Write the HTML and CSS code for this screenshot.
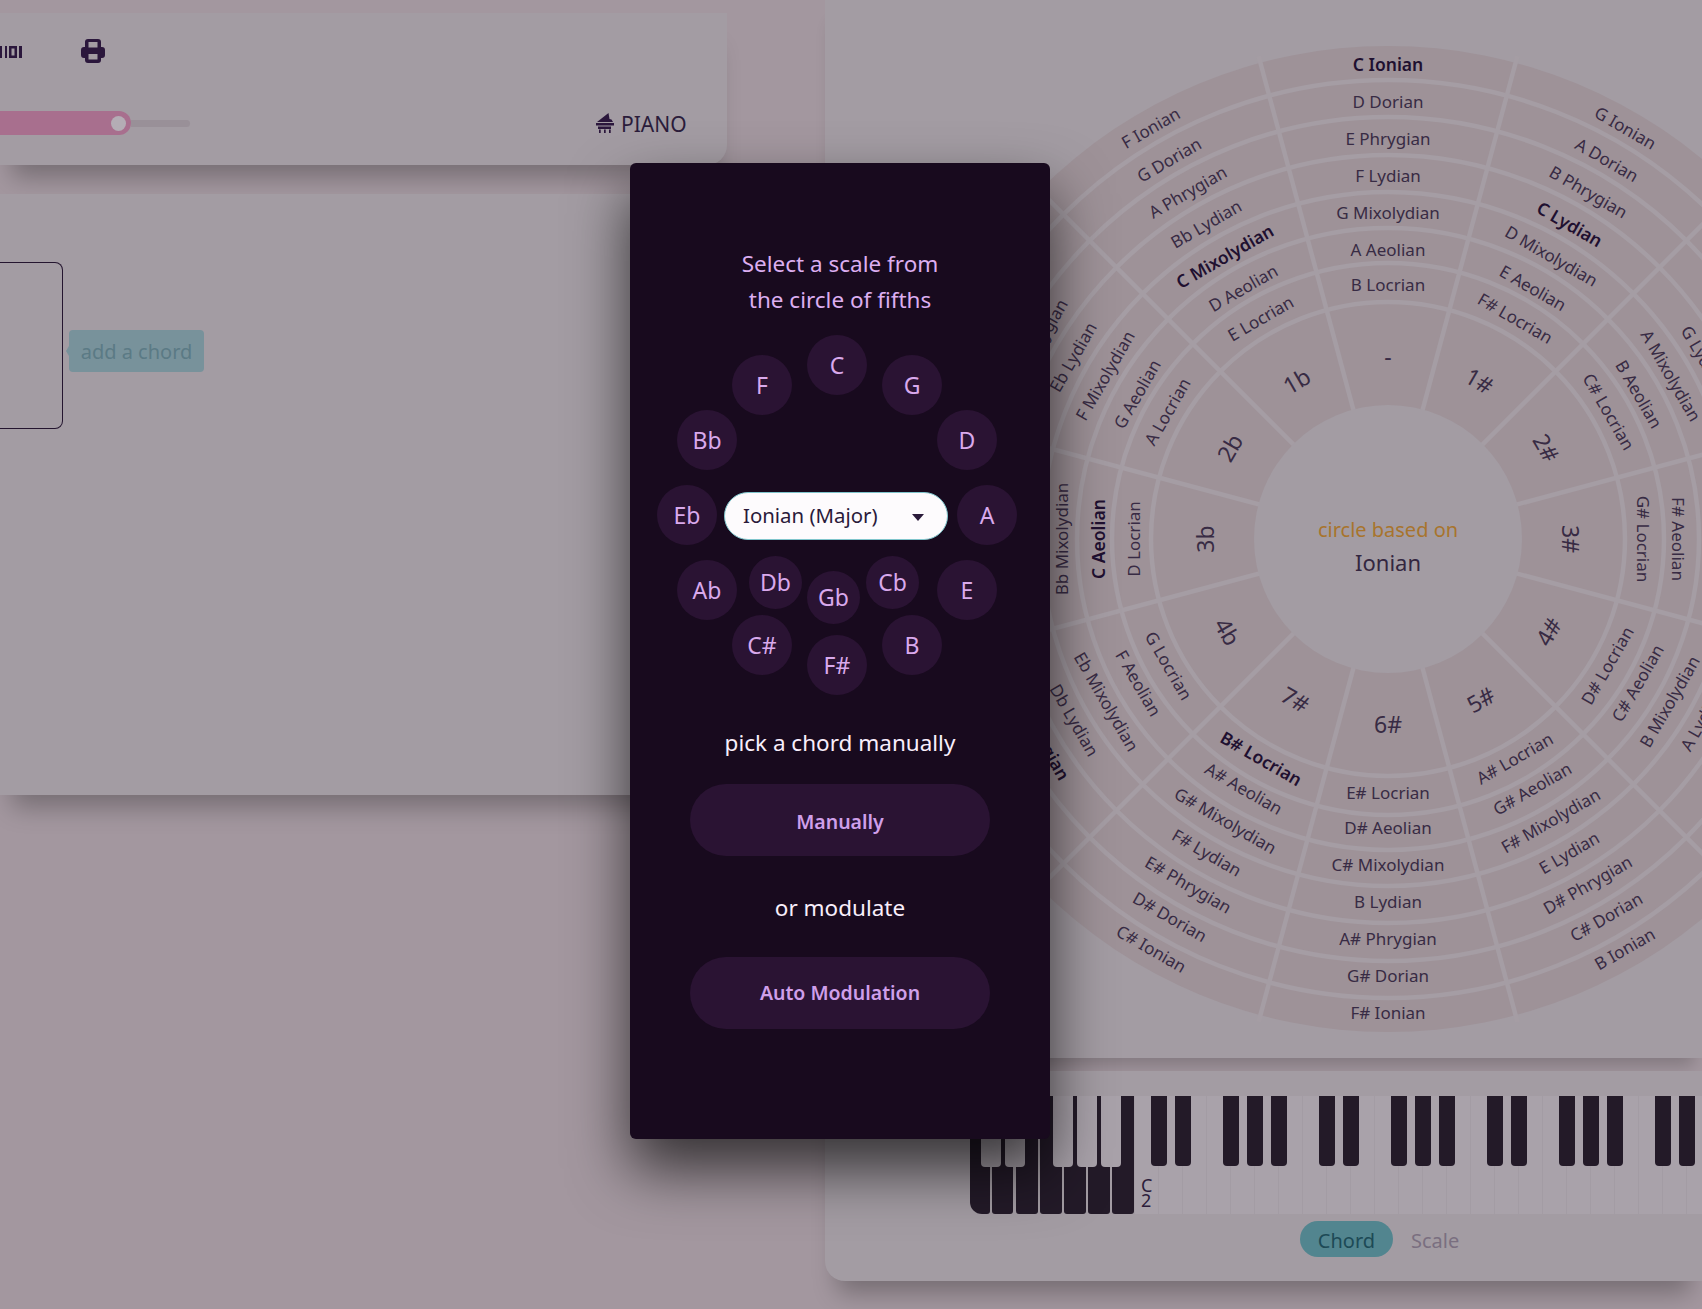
FILE: index.html
```html
<!DOCTYPE html>
<html lang="en">
<head>
<meta charset="utf-8">
<title>Circle of fifths</title>
<link rel="stylesheet" href="styles.css">
</head>
<body>
<div class="page">
  <div class="left-col">
    <section class="card transport">
      <div class="tools">
        <svg class="midi-icon" viewBox="0 0 22 12" aria-hidden="true"><path d="M0 0h2v12H0zM5 0h2v12H5zM9 0h8v12H9zM11.500 2.500v7h3v-7zM19 0h3v12h-3z" fill-rule="evenodd"/></svg>
        <svg class="print-icon" viewBox="0 0 24 24" aria-hidden="true"><path fill-rule="evenodd" d="M7 0h10a3 3 0 0 1 3 3v5h1a3 3 0 0 1 3 3v5a3 3 0 0 1-3 3h-1v2a3 3 0 0 1-3 3H7a3 3 0 0 1-3-3v-2H3a3 3 0 0 1-3-3v-5a3 3 0 0 1 3-3h1V3a3 3 0 0 1 3-3zM7.500 3v5.500h9V3zM7.500 15v5.500h9V15z"/></svg>
      </div>
      <div class="slider-row">
        <div class="slider-fill"><span class="slider-thumb"></span></div>
        <div class="slider-rest"></div>
        <div class="instrument">
          <svg class="piano-icon" viewBox="0 0 20 20" aria-hidden="true"><path d="M13.500 0L2 9h16l-1.500-2.500L14.500 6zM1 10h18v2.500H1zM3 13.500h13V16H3zM4 16.500h1.700V20H4zM9 16.500h1.700V20H9zM14 16.500h1.700V20H14z"/></svg>
          <span>PIANO</span>
        </div>
      </div>
    </section>
    <section class="card editor">
      <div class="chord-slot"></div>
      <div class="add-chord">add a chord</div>
    </section>
  </div>

  <div class="right-col">
    <section class="wheel-card">
      <svg class="wheel" viewBox="-493 -493 986 986" role="img" aria-label="Circle of fifths">
        <circle class="ring-bg" r="493"/>
        <g class="grid-lines">
          <circle r="459"/><circle r="422"/><circle r="384"/><circle r="347"/><circle r="311"/><circle r="276"/><circle r="237"/>
          <line y1="-500" y2="500" transform="rotate(15)"/>
          <line y1="-500" y2="500" transform="rotate(45)"/>
          <line y1="-500" y2="500" transform="rotate(75)"/>
          <line y1="-500" y2="500" transform="rotate(105)"/>
          <line y1="-500" y2="500" transform="rotate(135)"/>
          <line y1="-500" y2="500" transform="rotate(165)"/>
        </g>
        <circle class="hub" r="134"/>
        <text class="hub-top" y="-10">circle based on</text>
        <text class="hub-mode" y="23">Ionian</text>

        <g class="sector">
          <text class="b" y="-474">C Ionian</text><text y="-437">D Dorian</text><text y="-400">E Phrygian</text><text y="-363">F Lydian</text><text y="-326">G Mixolydian</text><text y="-289">A Aeolian</text><text y="-254">B Locrian</text><text class="num" y="-184">-</text>
        </g>
        <g class="sector" transform="rotate(30)">
          <text y="-474">G Ionian</text><text y="-437">A Dorian</text><text y="-400">B Phrygian</text><text class="b" y="-363">C Lydian</text><text y="-326">D Mixolydian</text><text y="-289">E Aeolian</text><text y="-254">F# Locrian</text><text class="num" y="-184">1#</text>
        </g>
        <g class="sector" transform="rotate(60)">
          <text y="-474">D Ionian</text><text y="-437">E Dorian</text><text y="-400">F# Phrygian</text><text y="-363">G Lydian</text><text y="-326">A Mixolydian</text><text y="-289">B Aeolian</text><text y="-254">C# Locrian</text><text class="num" y="-184">2#</text>
        </g>
        <g class="sector" transform="rotate(90)">
          <text y="-474">A Ionian</text><text y="-437">B Dorian</text><text y="-400">C# Phrygian</text><text y="-363">D Lydian</text><text y="-326">E Mixolydian</text><text y="-289">F# Aeolian</text><text y="-254">G# Locrian</text><text class="num" y="-184">3#</text>
        </g>
        <g class="sector" transform="rotate(-60)">
          <text y="474">E Ionian</text><text y="437">F# Dorian</text><text y="400">G# Phrygian</text><text y="363">A Lydian</text><text y="326">B Mixolydian</text><text y="289">C# Aeolian</text><text y="254">D# Locrian</text><text class="num" y="184">4#</text>
        </g>
        <g class="sector" transform="rotate(-30)">
          <text y="474">B Ionian</text><text y="437">C# Dorian</text><text y="400">D# Phrygian</text><text y="363">E Lydian</text><text y="326">F# Mixolydian</text><text y="289">G# Aeolian</text><text y="254">A# Locrian</text><text class="num" y="184">5#</text>
        </g>
        <g class="sector">
          <text y="474">F# Ionian</text><text y="437">G# Dorian</text><text y="400">A# Phrygian</text><text y="363">B Lydian</text><text y="326">C# Mixolydian</text><text y="289">D# Aeolian</text><text y="254">E# Locrian</text><text class="num" y="184">6#</text>
        </g>
        <g class="sector" transform="rotate(30)">
          <text y="474">C# Ionian</text><text y="437">D# Dorian</text><text y="400">E# Phrygian</text><text y="363">F# Lydian</text><text y="326">G# Mixolydian</text><text y="289">A# Aeolian</text><text class="b" y="254">B# Locrian</text><text class="num" y="184">7#</text>
        </g>
        <g class="sector" transform="rotate(60)">
          <text y="474">Ab Ionian</text><text y="437">Bb Dorian</text><text class="b" y="400">C Phrygian</text><text y="363">Db Lydian</text><text y="326">Eb Mixolydian</text><text y="289">F Aeolian</text><text y="254">G Locrian</text><text class="num" y="184">4b</text>
        </g>
        <g class="sector" transform="rotate(-90)">
          <text y="-474">Eb Ionian</text><text y="-437">F Dorian</text><text y="-400">G Phrygian</text><text y="-363">Ab Lydian</text><text y="-326">Bb Mixolydian</text><text class="b" y="-289">C Aeolian</text><text y="-254">D Locrian</text><text class="num" y="-184">3b</text>
        </g>
        <g class="sector" transform="rotate(-60)">
          <text y="-474">Bb Ionian</text><text class="b" y="-437">C Dorian</text><text y="-400">D Phrygian</text><text y="-363">Eb Lydian</text><text y="-326">F Mixolydian</text><text y="-289">G Aeolian</text><text y="-254">A Locrian</text><text class="num" y="-184">2b</text>
        </g>
        <g class="sector" transform="rotate(-30)">
          <text y="-474">F Ionian</text><text y="-437">G Dorian</text><text y="-400">A Phrygian</text><text y="-363">Bb Lydian</text><text class="b" y="-326">C Mixolydian</text><text y="-289">D Aeolian</text><text y="-254">E Locrian</text><text class="num" y="-184">1b</text>
        </g>
      </svg>
    </section>

    <section class="piano-card">
      <div class="keyboard">
        <div class="whites">
          <i class="wk dark first"></i><i class="wk dark second"></i><i class="wk dark"></i><i class="wk dark"></i><i class="wk dark"></i><i class="wk dark"></i><i class="wk dark last"></i>
          <i class="wk"><b class="octave">C<br>2</b></i><i class="wk"></i><i class="wk"></i><i class="wk"></i><i class="wk"></i><i class="wk"></i><i class="wk"></i>
          <i class="wk"></i><i class="wk"></i><i class="wk"></i><i class="wk"></i><i class="wk"></i><i class="wk"></i><i class="wk"></i>
          <i class="wk"></i><i class="wk"></i><i class="wk"></i><i class="wk"></i><i class="wk"></i><i class="wk"></i><i class="wk"></i>
          <i class="wk"></i><i class="wk"></i><i class="wk"></i>
        </div>
        <div class="blacks">
          <i class="lk first"></i><i class="lk"></i><i class="lk wide"></i><i class="lk"></i><i class="lk"></i>
          <i class="bk start"></i><i class="bk"></i>
          <i class="bk gs"></i><i class="bk"></i><i class="bk"></i>
          <i class="bk gs"></i><i class="bk"></i>
          <i class="bk gs"></i><i class="bk"></i><i class="bk"></i>
          <i class="bk gs"></i><i class="bk"></i>
          <i class="bk gs"></i><i class="bk"></i><i class="bk"></i>
          <i class="bk gs"></i><i class="bk"></i>
        </div>
      </div>
      <div class="tabs">
        <span class="tab active">Chord</span>
        <span class="tab">Scale</span>
      </div>
    </section>
  </div>
</div>

<aside class="modal">
  <h2 class="modal-title">Select a scale from<br>the circle of fifths</h2>
  <div class="note-wheel">
    <button class="note n-c">C</button>
    <button class="note n-f">F</button>
    <button class="note n-g">G</button>
    <button class="note n-bb">Bb</button>
    <button class="note n-d">D</button>
    <button class="note n-eb">Eb</button>
    <button class="note n-a">A</button>
    <button class="note n-ab">Ab</button>
    <button class="note n-e">E</button>
    <button class="note n-cs">C#</button>
    <button class="note n-b">B</button>
    <button class="note n-fs">F#</button>
    <button class="note small n-db">Db</button>
    <button class="note small n-cb">Cb</button>
    <button class="note small n-gb">Gb</button>
    <div class="mode-select">
      <span>Ionian (Major)</span>
      <svg class="caret" viewBox="0 0 14 8" aria-hidden="true"><path d="M0 0h14L7 8z"/></svg>
    </div>
  </div>
  <p class="modal-label first-label">pick a chord manually</p>
  <button class="pill first-pill">Manually</button>
  <p class="modal-label second-label">or modulate</p>
  <button class="pill second-pill">Auto Modulation</button>
</aside>
</body>
</html>
```

FILE: styles.css
```css
* { box-sizing: border-box; }
html, body { margin: 0; height: 100%; }
body {
  width: 1702px;
  height: 1309px;
  overflow: hidden;
  position: relative;
  background: #a3979f;
  font-family: "Noto Sans", "Open Sans", sans-serif;
  color: #2b1c3b;
}
.page { display: flex; height: 1309px; }
.left-col { width: 825px; flex: none; padding-top: 13px; display: flex; flex-direction: column; gap: 29px; }
.card {
  width: 727px;
  background: #a39ca3;
  box-shadow: 0 24px 24px -12px rgba(0, 0, 0, .28);
}
.transport {
  height: 152px;
  border-radius: 0 0 20px 0;
  padding-top: 26px;
  display: flex;
  flex-direction: column;
}
.tools { display: flex; align-items: center; height: 24px; }
.midi-icon { width: 22px; height: 12px; fill: #2b173c; margin-top: 1px; }
.print-icon { width: 24px; height: 24px; fill: #2b173c; margin-left: 59px; }
.slider-row { display: flex; align-items: center; margin-top: 48px; height: 24px; }
.slider-fill {
  width: 131px;
  height: 24px;
  border-radius: 0 12px 12px 0;
  background: #a86f8e;
  display: flex;
  align-items: center;
  justify-content: flex-end;
  padding-right: 5px;
}
.slider-thumb { width: 15px; height: 15px; border-radius: 50%; background: #b4adb5; }
.slider-rest { width: 59px; height: 7px; background: #999098; border-radius: 0 4px 4px 0; }
.instrument {
  margin-left: 405px;
  display: flex;
  align-items: center;
  gap: 6px;
  padding-top: 1px;
  font-size: 21px;
  line-height: 24px;
  color: #2b1c3b;
}
.piano-icon { width: 20px; height: 20px; fill: #2b173c; margin-top: -1px; }
.editor {
  height: 601px;
  padding-top: 68px;
  display: flex;
  align-items: flex-start;
  gap: 6px;
}
.chord-slot {
  width: 63px;
  height: 167px;
  border: 1px solid #24152f;
  border-left: 0;
  border-radius: 0 8px 8px 0;
}
.add-chord {
  position: relative;
  margin-top: 68px;
  width: 135px;
  height: 42px;
  border-radius: 4px;
  background: #78929b;
  color: #5b7a85;
  font-size: 20px;
  line-height: 43px;
  text-align: center;
}
.add-chord::before {
  content: "";
  position: absolute;
  left: -3px;
  top: 16px;
  border-style: solid;
  border-width: 5px 3px 5px 0;
  border-color: transparent #78929b transparent transparent;
}
.right-col { flex: 1; min-width: 0; display: flex; flex-direction: column; }
.wheel-card {
  height: 1058px;
  background: #a39ca3;
  padding: 46px 0 0 70px;
  overflow: hidden;
  box-shadow: 0 16px 16px -8px rgba(0, 0, 0, .2);
}
.wheel { width: 986px; height: 986px; display: block; }
.ring-bg { fill: #9e9298; }
.grid-lines circle { fill: none; stroke: #a59da4; stroke-width: 4.500; }
.grid-lines line { stroke: #a59da4; stroke-width: 4.500; }
.hub { fill: #a39ca3; }
.wheel text {
  text-anchor: middle;
  dominant-baseline: central;
  font-family: "Noto Sans", "Open Sans", sans-serif;
}
.sector text { font-size: 17px; fill: #382b44; baseline-shift: 1px; }
.sector .b { font-size: 17.500px; font-weight: 600; fill: #1f1030; }
.sector .num { font-size: 23px; baseline-shift: -1px; }
.wheel .hub-top { font-size: 20px; fill: #a8742c; }
.wheel .hub-mode { font-size: 22px; fill: #33263f; }
.piano-card {
  margin-top: 13px;
  height: 210px;
  background: #a39ca3;
  border-radius: 0 0 0 20px;
  padding-top: 25px;
  box-shadow: 0 24px 24px -12px rgba(0, 0, 0, .28);
}
.keyboard { position: relative; height: 118px; margin-left: 145px; overflow: hidden; }
.whites { display: flex; height: 118px; }
.wk {
  position: relative;
  flex: none;
  width: 24px;
  height: 118px;
  background: #a9a2aa;
  border-left: 1px solid #a39ca4;
  display: block;
}
.wk.dark { background: #231a28; border-left: 0; margin-right: 2px; width: 22px; border-radius: 0 0 3px 3px; }
.wk.first { width: 20px; border-radius: 0 0 3px 12px; }
.wk.second { width: 21px; margin-right: 3px; }
.wk.last { margin-right: 0; }
.octave {
  position: absolute;
  left: 6px;
  top: 82px;
  font-size: 18px;
  line-height: 15px;
  font-style: normal;
  font-weight: 400;
}
.blacks { position: absolute; left: 0; top: 0; display: flex; align-items: flex-start; }
.lk { flex: none; width: 20px; height: 71px; margin-left: 4px; background: #a9a2aa; border-radius: 0 0 4px 4px; }
.lk.first { margin-left: 11px; }
.lk.wide { margin-left: 28px; }
.bk { flex: none; width: 16px; height: 70px; margin-left: 8px; background: #231a28; border-radius: 0 0 4px 4px; }
.bk.start { margin-left: 30px; }
.bk.gs { margin-left: 32px; }
.tabs { display: flex; align-items: center; gap: 18px; margin: 7px 0 0 475px; height: 36px; }
.tab { font-size: 20px; color: #7a6f80; height: 36px; padding-top: 3px; line-height: 33px; }
.tab.active { width: 93px; text-align: center; border-radius: 18px; background: #52858f; color: #1d4a56; }

.modal {
  position: absolute;
  left: 630px;
  top: 163px;
  width: 420px;
  height: 976px;
  padding-top: 83px;
  border-radius: 6px;
  background: #180a1e;
  box-shadow: 0 30px 60px rgba(0, 0, 0, .68);
  display: flex;
  flex-direction: column;
  align-items: center;
  text-align: center;
}
.modal-title { margin: 0; font-size: 22.500px; line-height: 36px; font-weight: 400; color: #dcaef0; }
.note-wheel { position: relative; width: 420px; height: 376px; margin-top: 7px; flex: none; }
.note {
  position: absolute;
  width: 60px;
  height: 60px;
  padding: 0;
  border: 0;
  border-radius: 50%;
  background: #2a1333;
  color: #d9a9ec;
  font: 400 23px/60px "Noto Sans", "Open Sans", sans-serif;
}
.note.small { width: 53px; height: 53px; line-height: 53px; }
.n-c { left: 177px; top: 10px; }
.n-f { left: 102px; top: 30px; }
.n-g { left: 252px; top: 30px; }
.n-bb { left: 47px; top: 85px; }
.n-d { left: 307px; top: 85px; }
.n-eb { left: 27px; top: 160px; }
.n-a { left: 327px; top: 160px; }
.n-ab { left: 47px; top: 235px; }
.n-e { left: 307px; top: 235px; }
.n-cs { left: 102px; top: 290px; }
.n-b { left: 252px; top: 290px; }
.n-fs { left: 177px; top: 310px; }
.n-db { left: 119px; top: 231px; }
.n-cb { left: 236px; top: 231px; }
.n-gb { left: 177px; top: 246px; }
.mode-select {
  position: absolute;
  left: 94px;
  top: 167px;
  width: 224px;
  height: 48px;
  border: 1.500px solid #7fc5cc;
  border-radius: 24px;
  background: #fdfbfd;
  color: #2a1a3a;
  font-size: 20.400px;
  line-height: 45px;
  padding: 0 23px 2px 18px;
  display: flex;
  align-items: center;
  justify-content: space-between;
}
.caret { width: 12px; height: 7px; fill: #2a1a3a; margin-top: 5px; }
.modal-label { margin: 0; font-size: 22.500px; line-height: 33px; color: #f8eefb; }
.first-label { margin-top: 25px; }
.second-label { margin-top: 35px; }
.pill {
  width: 300px;
  height: 72px;
  border: 0;
  border-radius: 36px;
  background: #2a1333;
  color: #cf9fea;
  font: 600 19.500px/72px "Noto Sans", "Open Sans", sans-serif;
  padding: 0;
  flex: none;
}
.first-pill { margin-top: 25px; padding-top: 2px; }
.second-pill { margin-top: 33px; }
```
